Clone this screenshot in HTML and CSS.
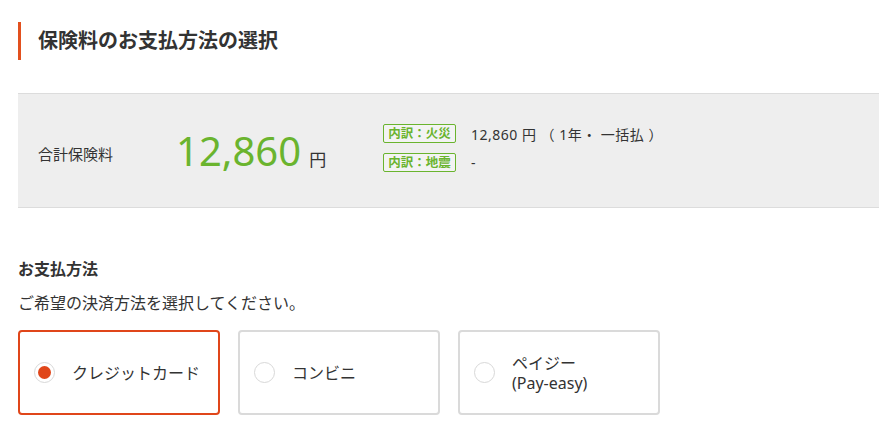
FILE: index.html
```html
<!DOCTYPE html>
<html lang="ja">
<head>
    <meta charset="UTF-8">
    <meta name="viewport" content="width=device-width, initial-scale=1.0">
    <title>保険料のお支払方法の選択</title>
    <link rel="stylesheet" href="styles.css">
</head>
<body>

    <div class="page">
        <h1 class="page-title">保険料のお支払方法の選択</h1>

        <section class="summary">
            <div class="summary-label">合計保険料</div>
            <div class="summary-total">
                <span class="total-number">12,860</span>
                <span class="total-unit">円</span>
            </div>
            <div class="breakdown">
                <div class="breakdown-row">
                    <span class="tag">内訳：火災</span>
                    <span class="breakdown-value">12,860 円 （ 1年・ 一括払 ）</span>
                </div>
                <div class="breakdown-row">
                    <span class="tag">内訳：地震</span>
                    <span class="breakdown-value">-</span>
                </div>
            </div>
        </section>

        <section class="payment">
            <h2 class="payment-title">お支払方法</h2>
            <p class="payment-lead">ご希望の決済方法を選択してください。</p>
            <div class="methods">
                <label class="method is-selected">
                    <span class="radio"></span>
                    <span class="method-name">クレジットカード</span>
                </label>
                <label class="method">
                    <span class="radio"></span>
                    <span class="method-name">コンビニ</span>
                </label>
                <label class="method">
                    <span class="radio"></span>
                    <span class="method-name">ペイジー<br>(Pay-easy)</span>
                </label>
            </div>
        </section>
    </div>

</body>
</html>
```

FILE: styles.css
```css
/* Base */
body {
    font-family: "Noto Sans", "Noto Sans CJK JP", sans-serif;
    background-color: #fff;
    color: #333;
    margin: 0;
}
.page {
    width: 861px;
    margin-left: 18px;
    padding-top: 22px;
}
/* Page heading with orange bar */
.page-title {
    margin: 0;
    border-left: 3px solid #e2501e;
    padding-left: 17px;
    height: 38px;
    line-height: 38px;
    font-size: 20px;
    font-weight: bold;
    color: #333;
}
/* Total premium box */
.summary {
    margin-top: 33px;
    height: 113px;
    background: #eeeeee;
    border-top: 1px solid #dcdcdc;
    border-bottom: 1px solid #dcdcdc;
    display: flex;
    align-items: center;
    padding: 0 20px;
}
.summary-label {
    width: 138px;
    font-size: 15px;
    margin-top: 6px;
}
.summary-total {
    width: 207px;
    display: flex;
    align-items: baseline;
    gap: 8px;
}
.total-number {
    font-family: "Noto Sans", sans-serif;
    font-size: 40px;
    color: #6ab42e;
    line-height: 1;
}
.total-unit {
    font-size: 17px;
}
.breakdown {
    display: flex;
    flex-direction: column;
    gap: 9px;
    margin-top: -6px;
}
.breakdown-row {
    display: flex;
    align-items: center;
    gap: 15px;
}
.tag {
    display: inline-block;
    width: 71px;
    height: 17px;
    line-height: 17px;
    text-align: center;
    border: 1px solid #6ab42e;
    border-radius: 2px;
    color: #6ab42e;
    font-size: 12.5px;
    font-weight: bold;
    background: #f3f3f3;
}
.breakdown-value {
    font-size: 14px;
    letter-spacing: 0.5px;
}
/* Payment method */
.payment {
    padding-top: 50px;
}
.payment-title {
    margin: 0;
    font-size: 16px;
    font-weight: bold;
    line-height: 22px;
}
.payment-lead {
    margin: 12px 0 0;
    font-size: 16px;
    line-height: 22px;
}
.methods {
    display: flex;
    gap: 18px;
    margin-top: 16px;
}
.method {
    box-sizing: border-box;
    width: 202px;
    height: 85px;
    border: 2px solid #dadada;
    border-radius: 4px;
    display: flex;
    align-items: center;
    padding-left: 14px;
    gap: 17px;
    background: #fff;
}
.method.is-selected {
    border-color: #e0461a;
}
.radio {
    box-sizing: border-box;
    width: 21px;
    height: 21px;
    border: 1px solid #d8d8d8;
    border-radius: 50%;
    display: flex;
    align-items: center;
    justify-content: center;
    flex-shrink: 0;
}
.is-selected .radio::after {
    content: "";
    width: 13px;
    height: 13px;
    border-radius: 50%;
    background: #e0461a;
}
.method-name {
    font-size: 16px;
    line-height: 20px;
}
```
